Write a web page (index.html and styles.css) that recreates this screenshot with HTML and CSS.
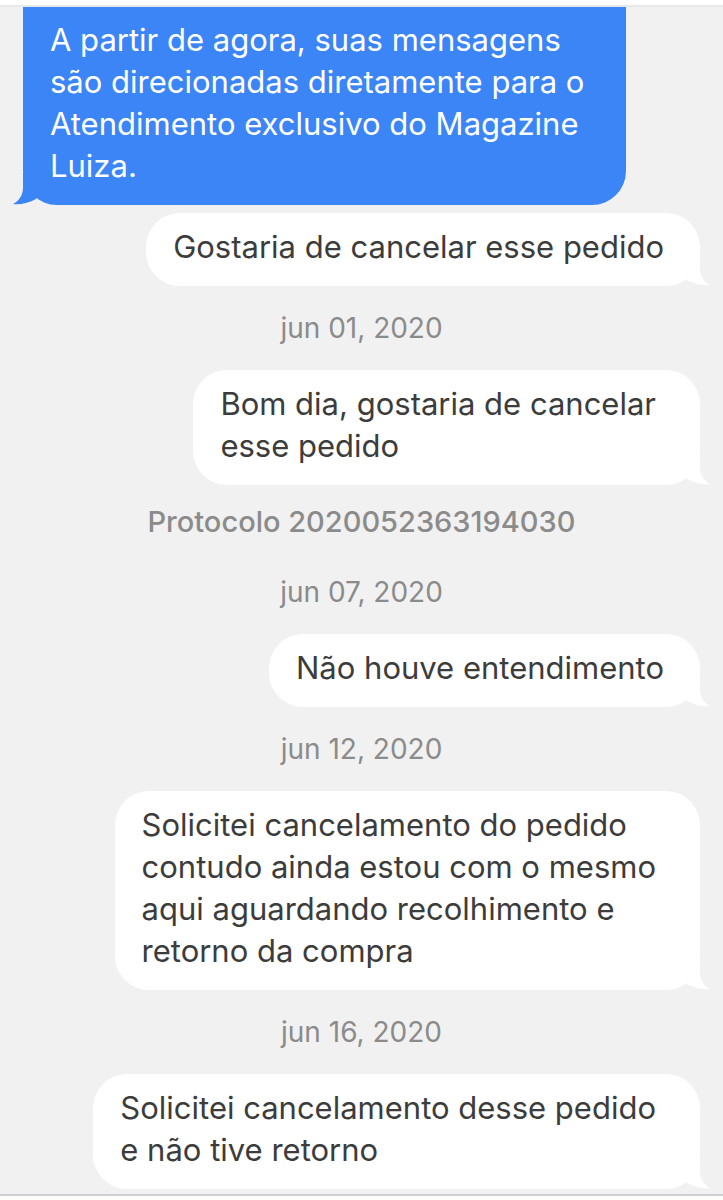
FILE: index.html
```
<!DOCTYPE html>
<html lang="pt-BR">
<head>
<meta charset="utf-8">
<meta name="viewport" content="width=device-width, initial-scale=1">
<title>Atendimento</title>
<link rel="stylesheet" href="styles.css">
</head>
<body>
<main class="chat">
  <div class="bubble received">
    <p>A partir de agora, suas mensagens<br>são direcionadas diretamente para o<br>Atendimento exclusivo do Magazine<br>Luiza.</p>
    <svg class="tail" viewBox="0 0 40 32" aria-hidden="true"><path d="M0 0H30V15C30 22 34 28 40 31C33 32 24 30 17 26Z"/></svg>
  </div>
  <div class="bubble sent">
    <p>Gostaria de cancelar esse pedido</p>
    <svg class="tail" viewBox="0 0 40 32" aria-hidden="true"><path d="M0 0H30V15C30 22 34 28 40 31C33 32 24 30 17 26Z"/></svg>
  </div>
  <time class="date" datetime="2020-06-01">jun 01, 2020</time>
  <div class="bubble sent multiline">
    <p>Bom dia, gostaria de cancelar<br>esse pedido</p>
    <svg class="tail" viewBox="0 0 40 32" aria-hidden="true"><path d="M0 0H30V15C30 22 34 28 40 31C33 32 24 30 17 26Z"/></svg>
  </div>
  <p class="protocol">Protocolo 2020052363194030</p>
  <time class="date" datetime="2020-06-07">jun 07, 2020</time>
  <div class="bubble sent">
    <p>Não houve entendimento</p>
    <svg class="tail" viewBox="0 0 40 32" aria-hidden="true"><path d="M0 0H30V15C30 22 34 28 40 31C33 32 24 30 17 26Z"/></svg>
  </div>
  <time class="date" datetime="2020-06-12">jun 12, 2020</time>
  <div class="bubble sent multiline">
    <p>Solicitei cancelamento do pedido<br>contudo ainda estou com o mesmo<br>aqui aguardando recolhimento e<br>retorno da compra</p>
    <svg class="tail" viewBox="0 0 40 32" aria-hidden="true"><path d="M0 0H30V15C30 22 34 28 40 31C33 32 24 30 17 26Z"/></svg>
  </div>
  <time class="date" datetime="2020-06-16">jun 16, 2020</time>
  <div class="bubble sent multiline">
    <p>Solicitei cancelamento desse pedido<br>e não tive retorno</p>
    <svg class="tail" viewBox="0 0 40 32" aria-hidden="true"><path d="M0 0H30V15C30 22 34 28 40 31C33 32 24 30 17 26Z"/></svg>
  </div>
</main>
</body>
</html>
```

FILE: styles.css
```
* { box-sizing: border-box; }

body {
  margin: 0;
  height: 100vh;
  padding: 5px 0 4px;
  display: flex;
  flex-direction: column;
  background: #fff;
  font-family: Inter, "Liberation Sans", sans-serif;
  overflow: hidden;
}

/* The list is anchored to its newest message */
.chat {
  flex: 1;
  min-height: 0;
  display: flex;
  flex-direction: column;
  justify-content: flex-end;
  padding: 0 23px 5px;
  border-top: 2px solid #e8e8e8;
  border-bottom: 2px solid #cfcfd3;
  background: #f1f1f1;
  overflow: hidden;
}

p { margin: 0; }

.bubble {
  position: relative;
  flex: none;
  padding: 13px 36px 18px 27px;
  border-radius: 34px;
  font-size: 31px;
  line-height: 42px;
}

.sent {
  align-self: flex-end;
  background: #fff;
  color: #3c3c3c;
}

.multiline { padding-right: 44px; }

.received {
  align-self: flex-start;
  margin-bottom: 8px;
  padding-right: 42px;
  border-radius: 0 0 34px 34px;
  background: #3b85f6;
  color: #fff;
}

.tail {
  position: absolute;
  right: -10px;
  bottom: 0;
  width: 40px;
  height: 32px;
  fill: #fff;
}

.received .tail {
  right: auto;
  left: -10px;
  fill: #3b85f6;
  transform: scaleX(-1);
}

.date,
.protocol {
  flex: none;
  color: #8b8b8b;
  font-size: 28px;
  text-align: center;
}

.date { line-height: 84px; }

.protocol {
  padding: 16px 0 7px;
  font-size: 29px;
  font-weight: 500;
  line-height: 42px;
}
```
